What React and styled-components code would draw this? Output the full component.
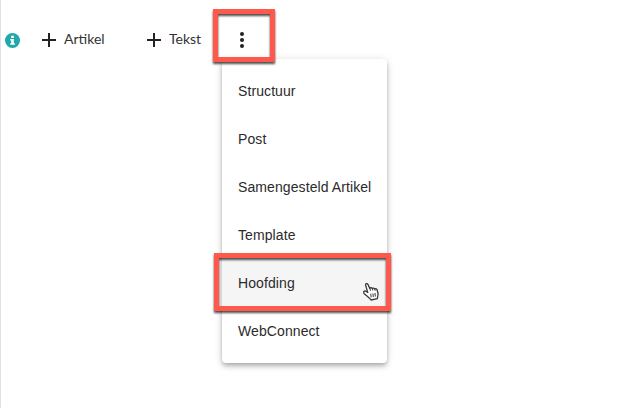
import React from 'react';
import styled, { createGlobalStyle } from 'styled-components'

const GlobalStyle = createGlobalStyle`
    * {
        box-sizing: border-box;
    }

    body {
        margin: 0;
        background-color: #fff;
        overflow: hidden;
    }
`

const Page = styled.main`
    min-height: 100vh;
    border-left: 1px solid #e2e2e2;
    padding: 20px 0 0 4px;
`

const Toolbar = styled.div`
    display: flex;
    align-items: center;
    height: 40px;
`

const InfoIcon = styled.svg`
    width: 15px;
    height: 15px;
    margin-right: 21px;
`

const AddButton = styled.button`
    display: flex;
    align-items: center;
    gap: 7px;
    width: ${({ $width }) => $width}px;
    padding: 0;
    border: none;
    background: none;
    color: #333;
    font-family: 'Lato', sans-serif;
    font-size: 14px;
    line-height: 20px;
    cursor: pointer;

    svg {
        width: 16px;
        height: 16px;
    }
`

const Label = styled.span`
    padding-bottom: 2px;
`

const More = styled.div`
    position: relative;
    width: 40px;
    height: 40px;
`

const MoreButton = styled.button`
    display: flex;
    flex-direction: column;
    align-items: center;
    justify-content: center;
    gap: 2px;
    width: 40px;
    height: 40px;
    padding: 0;
    border: none;
    background: none;
    cursor: pointer;
`

const Dot = styled.span`
    width: 4px;
    height: 4px;
    border-radius: 50%;
    background-color: #222;
`

const Menu = styled.ul`
    position: absolute;
    top: 39px;
    left: 0;
    width: 165px;
    margin: 0;
    padding: 8px 0;
    list-style: none;
    border-radius: 4px;
    background-color: #fff;
    box-shadow: 0 2px 4px -1px rgba(0, 0, 0, 0.2), 0 4px 5px rgba(0, 0, 0, 0.14), 0 1px 10px rgba(0, 0, 0, 0.12);
`

const MenuItem = styled.li`
    position: relative;
    display: flex;
    align-items: center;
    height: 48px;
    padding: 0 16px;
    background-color: ${({ $active }) => ($active ? '#f5f5f5' : 'transparent')};
    color: #2b2b2b;
    font-family: 'Liberation Sans', Arial, sans-serif;
    font-size: 14px;
    letter-spacing: 0.09px;
    white-space: nowrap;
    cursor: pointer;
`

const Highlight = styled.span`
    position: absolute;
    top: ${({ $top }) => $top}px;
    left: ${({ $left }) => $left}px;
    width: ${({ $width }) => $width}px;
    height: ${({ $height }) => $height}px;
    border: 5px solid #ff594c;
    filter: drop-shadow(0 2px 0.8px rgba(0, 0, 0, 0.7));
    pointer-events: none;
    z-index: 1;
`

const Hand = styled.svg`
    position: absolute;
    top: 23px;
    right: 7px;
    width: 18px;
    height: 19px;
    z-index: 2;
`

const items = ['Structuur', 'Post', 'Samengesteld Artikel', 'Template', 'Hoofding', 'WebConnect']

const Plus = () => (
    <svg viewBox="0 0 16 16">
        <path d="M8 1v14M1 8h14" stroke="#222" strokeWidth="2" fill="none" />
    </svg>
)

const App = () => {
  return (
    <>
    <GlobalStyle />
    <Page>
        <Toolbar>
            <InfoIcon viewBox="0 0 16 16">
                <circle cx="8" cy="8" r="8" fill="#20a8ab" />
                <path d="M6.6 2.8h2.8v2.4H6.6zM5.6 6.4h3.8v4.4h1.1v1.8H5.6v-1.8h1V8.1h-1z" fill="#fff" />
            </InfoIcon>
            <AddButton $width={105}>
                <Plus />
                <Label>Artikel</Label>
            </AddButton>
            <AddButton $width={76}>
                <Plus />
                <Label>Tekst</Label>
            </AddButton>
            <More>
                <MoreButton aria-label="Meer">
                    <Dot />
                    <Dot />
                    <Dot />
                </MoreButton>
                <Menu>
                    {items.map((item) => (
                        <MenuItem key={item} $active={item === 'Hoofding'}>
                            {item}
                            {item === 'Hoofding' && (
                                <>
                                <Highlight $top={-6} $left={-8} $width={177} $height={58} />
                                <Hand viewBox="0 0 18 19">
                                    <path
                                        d="M3.6 3.2C3.2 1.6 5.2 1 5.9 2.4L7.8 6.4C8.3 5.5 9.8 5.5 10.3 6.5C11 5.8 12.3 6 12.7 7C13.6 6.4 14.8 6.9 15.1 8L16 11.2C16.3 13.2 15.4 14.4 15.4 16.6L9 18C7.6 15.8 5 14.2 2.3 11.7C.8 10.2 2 8.5 3.8 9.2L5.8 10.4Z"
                                        fill="#fff"
                                        stroke="#3a3a3a"
                                        strokeWidth="1.3"
                                        strokeLinejoin="round"
                                    />
                                    <path d="M7.8 6.4l.8 2.4M10.3 6.5l.6 2M12.7 7l.5 1.7M8.7 11.7l.5 3.7M10.9 11.4l.4 3.6M13 11l.3 3.6" fill="none" stroke="#3a3a3a" />
                                </Hand>
                                </>
                            )}
                        </MenuItem>
                    ))}
                </Menu>
                <Highlight $top={-11} $left={-9} $width={62} $height={53} />
            </More>
        </Toolbar>
    </Page>
    </>
  )
}

export default App
